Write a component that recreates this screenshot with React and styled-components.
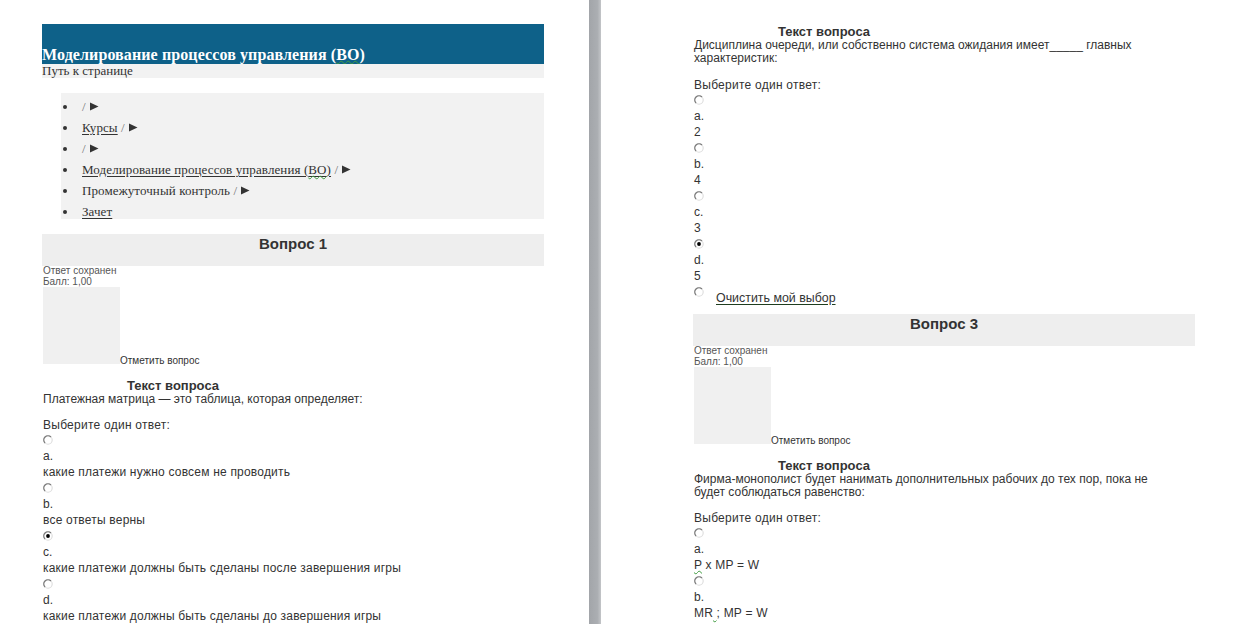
import React from 'react';
import styled, { createGlobalStyle } from 'styled-components';

const Global = createGlobalStyle`
  html, body { margin: 0; padding: 0; background: #ffffff; }
  body { width: 1235px; height: 624px; overflow: hidden; }
`;

const Viewport = styled.div`
  display: flex;
  width: 1235px;
  height: 624px;
  overflow: hidden;
  background: #ffffff;
  font-family: "Liberation Sans", Arial, sans-serif;
  color: #333333;
`;

const Page = styled.div`
  flex: 0 0 ${p => p.$w}px;
  box-sizing: border-box;
  padding: ${p => p.$top}px 0 0 ${p => p.$left}px;
  overflow: hidden;
`;

const Column = styled.div`
  width: 502px;
  display: flex;
  flex-direction: column;
`;

const Divider = styled.div`
  flex: 0 0 12px;
  background: linear-gradient(to right, #a2a5a9 0%, #abaeb2 70%, #c3c5c8 100%);
`;

const Banner = styled.div`
  height: 40px;
  background: #0e6189;
  display: flex;
  align-items: flex-end;
`;

const BannerTitle = styled.h1`
  margin: 0;
  font: bold 16px/18px "Liberation Serif", "Times New Roman", serif;
  letter-spacing: 0.1px;
  color: #ffffff;
  white-space: nowrap;
`;

const Squiggle = styled.span`
  text-decoration: underline wavy #3f9b3f;
  text-decoration-thickness: 1px;
  text-underline-offset: ${p => (p.$tight ? 0 : 1)}px;
`;

const PathLabel = styled.div`
  height: 14px;
  background: #f2f2f2;
  font: 13px/14px "Liberation Serif", "Times New Roman", serif;
  color: #333333;
  white-space: nowrap;
`;

const Crumbs = styled.ul`
  list-style: none;
  margin: 15px 0 0 19px;
  padding: 3px 0 0 1px;
  height: 126px;
  box-sizing: border-box;
  overflow: hidden;
  background: #f2f2f2;
`;

const Crumb = styled.li`
  display: flex;
  align-items: center;
  height: 21px;
  font: 13px/21px "Liberation Serif", "Times New Roman", serif;
  letter-spacing: 0.1px;
  color: #333333;
  white-space: pre;
`;

const Bullet = styled.span`
  flex: 0 0 20px;
  display: flex;
  align-items: center;
  &::before {
    content: "";
    width: 4px;
    height: 4px;
    border-radius: 50%;
    background: #333333;
    margin-left: 1px;
  }
`;

const CrumbLink = styled.a`
  color: #333333;
  text-decoration: underline;
  text-underline-offset: 2px;
`;

const Slash = styled.span`
  color: #777777;
`;

const Arrow = styled.svg`
  width: 9px;
  height: 9px;
  margin-left: 4px;
`;

const QHeader = styled.div`
  margin-top: ${p => p.$gap}px;
  height: 32px;
  box-sizing: border-box;
  padding-top: 1px;
  background: #eeeeee;
  text-align: center;
  font: bold 15px/18px "Liberation Sans", Arial, sans-serif;
  color: #333333;
`;

const State = styled.div`
  margin-left: 1px;
  font: 10px/10.5px "Liberation Sans", Arial, sans-serif;
  color: #555555;
`;

const FlagRow = styled.div`
  display: flex;
  align-items: flex-end;
  margin-left: 1px;
`;

const FlagBox = styled.div`
  width: 77px;
  height: 77px;
  background: #f0f0f0;
`;

const FlagLabel = styled.span`
  font: 10px/10px "Liberation Sans", Arial, sans-serif;
  color: #333333;
  white-space: nowrap;
  margin-bottom: -2px;
`;

const QTitle = styled.div`
  margin: ${p => p.$gap}px 0 0 85px;
  font: bold 13px/15px "Liberation Sans", Arial, sans-serif;
  color: #333333;
`;

const QBody = styled.div`
  font: 12px/13px "Liberation Sans", Arial, sans-serif;
  color: #333333;
  margin-left: 1px;
`;

const Prompt = styled.div`
  margin: ${p => p.$gap || 13}px 0 0 1px;
  font: 12px/13px "Liberation Sans", Arial, sans-serif;
  letter-spacing: 0.25px;
`;

const RadioRow = styled.div`
  height: 15px;
  display: flex;
  align-items: center;
  margin-left: 1px;
`;

const OptLetter = styled.div`
  margin: 2px 0 0 1px;
  font: 12px/15px "Liberation Sans", Arial, sans-serif;
`;

const OptText = styled.div`
  margin-left: 1px;
  font: 12px/16px "Liberation Sans", Arial, sans-serif;
  letter-spacing: 0.2px;
  white-space: nowrap;
`;

const ClearRow = styled.div`
  display: flex;
  align-items: flex-start;
  margin-left: 1px;
`;

const RadioSlot = styled.div`
  height: 15px;
  display: flex;
  align-items: center;
`;

const ClearLink = styled.a`
  margin: 7px 0 0 12px;
  font: 12.4px/14px "Liberation Sans", Arial, sans-serif;
  color: #333333;
  text-decoration: underline;
  text-decoration-color: #1f3d1f;
  text-underline-offset: 2px;
`;

const Radio = ({ checked }) => (
  <svg width="10" height="10" viewBox="0 0 10 10">
    <circle cx="5" cy="5" r="4.2" fill="#ffffff" stroke="#dcdcdc" strokeWidth="1.1" />
    <path d="M2.03 7.97 A4.2 4.2 0 0 1 7.97 2.03" fill="none" stroke="#7a7a7a" strokeWidth="1.3" />
    {checked && <circle cx="5" cy="5" r="1.9" fill="#000000" />}
  </svg>
);

const Tri = () => (
  <Arrow viewBox="0 0 9 9">
    <polygon points="0,0.5 8.5,4.5 0,8.5" fill="#333333" />
  </Arrow>
);

const Option = ({ letter, text, checked }) => (
  <>
    <RadioRow><Radio checked={checked} /></RadioRow>
    <OptLetter>{letter}</OptLetter>
    <OptText>{text}</OptText>
  </>
);

const QuestionInfo = ({ num, gap }) => (
  <>
    <QHeader $gap={gap}>Вопрос {num}</QHeader>
    <State>Ответ сохранен<br />Балл: 1,00</State>
    <FlagRow>
      <FlagBox />
      <FlagLabel>Отметить вопрос</FlagLabel>
    </FlagRow>
  </>
);

export default function App() {
  return (
    <>
      <Global />
      <Viewport>
        <Page $w={589} $top={24} $left={42}>
          <Column>
            <Banner>
              <BannerTitle>
                Моделирование процессов управления (<Squiggle $tight>ВО</Squiggle>)
              </BannerTitle>
            </Banner>
            <PathLabel>Путь к странице</PathLabel>
            <Crumbs>
              <Crumb><Bullet /> <Slash>/</Slash><Tri /></Crumb>
              <Crumb><Bullet /><CrumbLink>Курсы</CrumbLink><Slash> /</Slash><Tri /></Crumb>
              <Crumb><Bullet /> <Slash>/</Slash><Tri /></Crumb>
              <Crumb>
                <Bullet />
                <CrumbLink>Моделирование процессов управления (<Squiggle>ВО</Squiggle>)</CrumbLink>
                <Slash> /</Slash><Tri />
              </Crumb>
              <Crumb><Bullet />Промежуточный контроль<Slash> /</Slash><Tri /></Crumb>
              <Crumb><Bullet /><CrumbLink>Зачет</CrumbLink></Crumb>
            </Crumbs>
            <QuestionInfo num={1} gap={15} />
            <QTitle $gap={14}>Текст вопроса</QTitle>
            <QBody>Платежная матрица — это таблица, которая определяет:</QBody>
            <Prompt>Выберите один ответ:</Prompt>
            <Option letter="a." text="какие платежи нужно совсем не проводить" />
            <Option letter="b." text="все ответы верны" />
            <Option letter="c." text="какие платежи должны быть сделаны после завершения игры" checked />
            <Option letter="d." text="какие платежи должны быть сделаны до завершения игры" />
          </Column>
        </Page>
        <Divider />
        <Page $w={634} $top={24} $left={92}>
          <Column>
            <QTitle $gap={0}>Текст вопроса</QTitle>
            <QBody>Дисциплина очереди, или собственно система ожидания имеет_____ главных<br />характеристик:</QBody>
            <Prompt $gap={14}>Выберите один ответ:</Prompt>
            <Option letter="a." text="2" />
            <Option letter="b." text="4" />
            <Option letter="c." text="3" />
            <Option letter="d." text="5" checked />
            <ClearRow>
              <RadioSlot><Radio /></RadioSlot>
              <ClearLink>Очистить мой выбор</ClearLink>
            </ClearRow>
            <QuestionInfo num={3} gap={9} />
            <QTitle $gap={14}>Текст вопроса</QTitle>
            <QBody>Фирма-монополист будет нанимать дополнительных рабочих до тех пор, пока не<br />будет соблюдаться равенство:</QBody>
            <Prompt>Выберите один ответ:</Prompt>
            <Option letter="a." text={<><Squiggle>P</Squiggle> x MP = W</>} />
            <Option letter="b." text={<>MR<Squiggle> </Squiggle>; MP = W</>} />
          </Column>
        </Page>
      </Viewport>
    </>
  );
}
